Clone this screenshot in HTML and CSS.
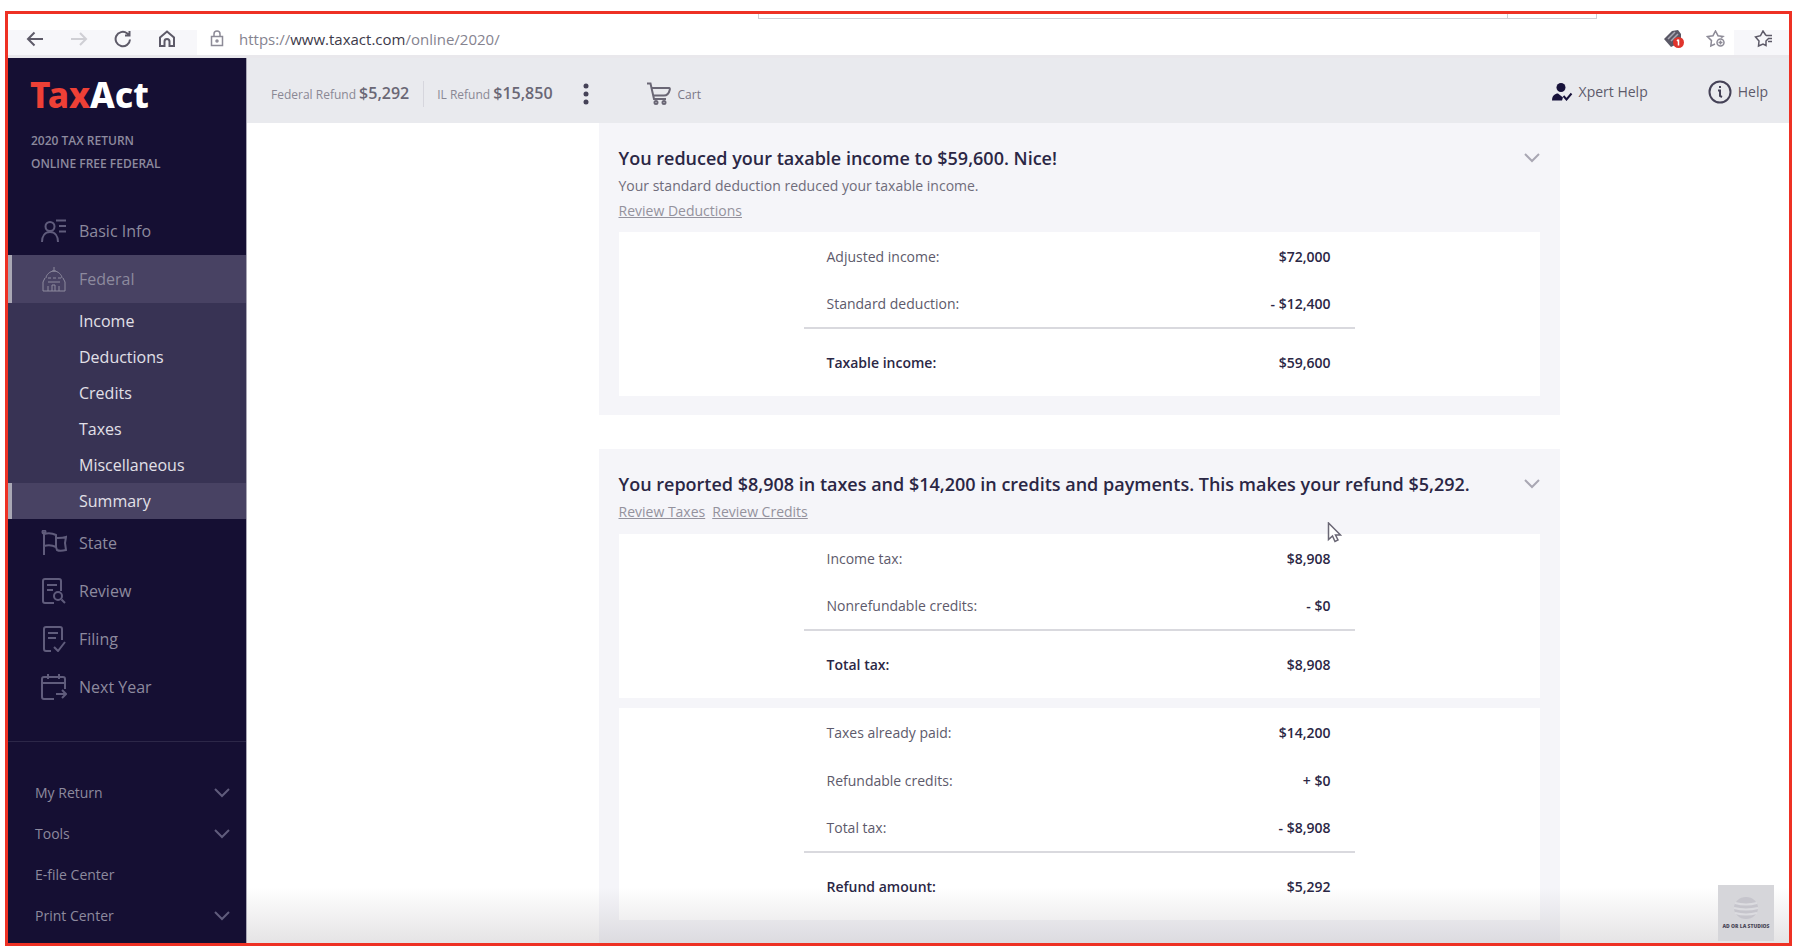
FILE: index.html
```html
<!DOCTYPE html>
<html lang="en">
<head>
<meta charset="utf-8">
<title>TaxAct - Federal Summary</title>
<link rel="stylesheet" href="styles.css">
</head>
<body>
<div class="window">
  <header class="browser">
    <div class="tabline"><div class="searchbox"></div></div>
    <div class="toolbar">
      <div class="nav-buttons">
        <button aria-label="Back"><svg width="18" height="16" viewBox="0 0 18 16"><path d="M17 8H2M8.500 1.500L2 8l6.500 6.500"/></svg></button>
        <button class="faded" aria-label="Forward"><svg width="18" height="16" viewBox="0 0 18 16"><path d="M1 8h15M10 2l6 6-6 6"/></svg></button>
        <button aria-label="Refresh"><svg width="18" height="18" viewBox="0 0 18 18"><path d="M16 9.500A7.200 7.200 0 1 1 13 3.200l2 1.500M15.500 1v4.500H11"/></svg></button>
        <button aria-label="Home"><svg width="18" height="18" viewBox="0 0 18 18"><path d="M2 7.500L9 1.500l7 6V16h-4.500v-4.500a2.500 2.500 0 0 0-5 0V16H2z"/></svg></button>
      </div>
      <div class="address">
        <svg class="lock" width="14" height="18" viewBox="0 0 14 18"><path d="M1.500 6.500h11v9h-11zM4 6.500V4a3 3 0 0 1 6 0v2.500"/><circle cx="7" cy="11" r="1"/></svg>
        <span class="url">https://<b>www.taxact.com</b>/online/2020/</span>
        <svg class="ext" width="22" height="20" viewBox="0 0 22 20"><path d="M1 10l8-8 6-1 3 4v10l-6 1-4 2z" fill="#5a5866"/><path d="M5 10l7-7M8 12l7-7" stroke="#a9a7b3" stroke-width="1.500"/><circle cx="15.500" cy="13.500" r="5.500" fill="#e0342c"/><path d="M15.500 10.500v6M14 12l1.500-1.500" stroke="#fff" stroke-width="1.500"/></svg>
        <svg class="fav" width="20" height="18" viewBox="0 0 20 18"><path d="M15 8l2-1.500-5-.8L9.500 1 7 5.700l-5.500.9 4 4L4.800 16 9 14"/><circle cx="14.500" cy="12.500" r="3.500"/><path d="M14.500 10.500v4M12.500 12.500h4"/></svg>
      </div>
      <button class="collections" aria-label="Favorites"><svg width="20" height="18" viewBox="0 0 20 18"><path d="M12 5.500L9 1 6.500 5.700 1.500 7l3.500 4L4.500 16 9 14l3 1.500V11l3-3M12 5.500h6M15 8.500h3M14 11.500h4"/></svg></button>
    </div>
  </header>
  <div class="app">
    <aside class="sidebar">
      <div class="logo"><span>Tax</span>Act</div>
      <p class="product">2020 TAX RETURN<br>ONLINE FREE FEDERAL</p>
      <nav class="menu">
        <a href="#"><svg width="26" height="24" viewBox="0 0 26 24"><circle cx="9" cy="7.500" r="4.500"/><path d="M1 23c0-6 3-10 8-10s8 4 8 10M15 1.500h10M18 7h7M18 12.500h7"/></svg>Basic Info</a>
        <a href="#" class="active"><svg width="26" height="26" viewBox="0 0 26 26"><path d="M13 1v4M11 5h4M5 12c0-3 4-7 8-7s8 4 8 7M4 12L2 16v9h22v-9l-2-4M7 12h3M12 12h3M17 12h3M7 25v-5M11 25v-6h3v6M18 25v-5M7 16h12"/></svg>Federal</a>
        <div class="submenu">
          <a href="#">Income</a><a href="#">Deductions</a><a href="#">Credits</a><a href="#">Taxes</a><a href="#">Miscellaneous</a><a href="#" class="current">Summary</a>
        </div>
        <a href="#"><svg width="26" height="26" viewBox="0 0 26 26"><path d="M3 2v23M3 4c4-1 8-1 12 1v12c-4-2-8-2-12-1M15 8h2c3 0 5 0 8-1l-1 6 1 7c-4 1-7 1-9 0l-1-3"/><circle cx="3" cy="2" r="1.500"/></svg>State</a>
        <a href="#"><svg width="26" height="26" viewBox="0 0 26 26"><path d="M13 25H4a2 2 0 0 1-2-2V3a2 2 0 0 1 2-2h14a2 2 0 0 1 2 2v10M6 7h10M6 12h6M20.500 21.500L24 25"/><circle cx="17" cy="18" r="4"/></svg>Review</a>
        <a href="#"><svg width="26" height="26" viewBox="0 0 26 26"><path d="M10 25H5a2 2 0 0 1-2-2V3a2 2 0 0 1 2-2h14a2 2 0 0 1 2 2v11M7 7h10M7 12h8M13 21l4 4 7-9"/></svg>Filing</a>
        <a href="#"><svg width="26" height="26" viewBox="0 0 26 26"><path d="M13 25H3a2 2 0 0 1-2-2V5a2 2 0 0 1 2-2h19a2 2 0 0 1 2 2v10M1 9h23M7 0v5M18 0v5M15 20h10M21 16l4 4-4 4"/></svg>Next Year</a>
      </nav>
      <nav class="tools">
        <button>My Return<svg width="16" height="10" viewBox="0 0 16 10"><path d="M1 1l7 7 7-7"/></svg></button>
        <button>Tools<svg width="16" height="10" viewBox="0 0 16 10"><path d="M1 1l7 7 7-7"/></svg></button>
        <button>E-file Center</button>
        <button>Print Center<svg width="16" height="10" viewBox="0 0 16 10"><path d="M1 1l7 7 7-7"/></svg></button>
      </nav>
    </aside>
    <div class="content">
      <div class="topbar">
        <div class="status">
          <div class="refund">Federal Refund <strong>$5,292</strong></div>
          <div class="refund split">IL Refund <strong>$15,850</strong></div>
          <button class="more" aria-label="More"><svg width="6" height="22" viewBox="0 0 6 22"><circle cx="3" cy="3" r="2.500"/><circle cx="3" cy="11" r="2.500"/><circle cx="3" cy="19" r="2.500"/></svg></button>
          <a class="cart" href="#"><svg width="24" height="24" viewBox="0 0 24 24"><path d="M0 1.500h3.500L7 17h12M5 6h17c1 0 1 1 .7 2-.7 3-2 5.500-5.700 5.500H7"/><circle cx="9" cy="20.500" r="1.500"/><circle cx="17" cy="20.500" r="1.500"/></svg><span>Cart</span></a>
        </div>
        <a class="help" href="#"><svg width="21" height="18" viewBox="0 0 21 18"><circle cx="9" cy="4.500" r="4.500" fill="#17123a"/><path d="M0 17.500c0-5 3-7 6-7l5 4-1 3z" fill="#17123a"/><path d="M11.500 13l3 3.500 5-6" fill="none" stroke="#17123a" stroke-width="2"/></svg>Xpert Help</a>
        <a class="help" href="#"><svg width="24" height="24" viewBox="0 0 24 24" fill="none" stroke="#454257" stroke-width="2"><circle cx="12" cy="12" r="10.500"/><path d="M10 10.500h2v5.500l2 1M12 6v2"/></svg>Help</a>
      </div>
      <main class="page">
        <section class="card">
          <div class="card-head">
            <h2>You reduced your taxable income to $59,600. Nice!</h2>
            <button aria-label="Collapse"><svg width="16" height="10" viewBox="0 0 16 10"><path d="M1 1l7 7 7-7"/></svg></button>
          </div>
          <p>Your standard deduction reduced your taxable income.</p>
          <div class="links"><a href="#">Review Deductions</a></div>
          <div class="panel"><table>
            <tr><th>Adjusted income:</th><td>$72,000</td></tr>
            <tr><th>Standard deduction:</th><td>- $12,400</td></tr>
            <tr class="total"><th>Taxable income:</th><td>$59,600</td></tr>
          </table></div>
        </section>
        <section class="card">
          <div class="card-head">
            <h2>You reported $8,908 in taxes and $14,200 in credits and payments. This makes your refund $5,292.</h2>
            <button aria-label="Collapse"><svg width="16" height="10" viewBox="0 0 16 10"><path d="M1 1l7 7 7-7"/></svg></button>
          </div>
          <div class="links"><a href="#">Review Taxes</a><a href="#">Review Credits</a></div>
          <div class="panel"><table>
            <tr><th>Income tax:</th><td>$8,908</td></tr>
            <tr><th>Nonrefundable credits:</th><td>- $0</td></tr>
            <tr class="total"><th>Total tax:</th><td>$8,908</td></tr>
          </table></div>
          <div class="panel"><table>
            <tr><th>Taxes already paid:</th><td>$14,200</td></tr>
            <tr><th>Refundable credits:</th><td>+ $0</td></tr>
            <tr><th>Total tax:</th><td>- $8,908</td></tr>
            <tr class="total"><th>Refund amount:</th><td>$5,292</td></tr>
          </table></div>
          <svg class="cursor" width="15" height="21" viewBox="0 0 15 21"><path d="M1.500 1v16.500l4-3.500 2.500 5.500 3-1.500-2.500-5h5z"/></svg>
        </section>
      </main>
      <div class="shade"></div>
      <div class="watermark"><svg width="26" height="24" viewBox="0 0 26 24"><ellipse cx="13" cy="12" rx="12" ry="11" fill="#c6c5cc"/><path d="M2 7q11 3 22 0M1 12q12 3 24 0M2 17q11 3 22 0" fill="none" stroke="#dcdce0" stroke-width="2"/></svg><span>AD OR LA STUDIOS</span></div>
    </div>
  </div>
</div>
</body>
</html>
```
FILE: styles.css
```css
* { box-sizing: border-box; }
html, body { height: 100%; }
body { margin: 0; padding: 11px 8px 6px 5px; background: #fff; font-family: "Open Sans", "Noto Sans", sans-serif; color: #454257; }
button { border: 0; padding: 0; background: none; font: inherit; color: inherit; display: flex; align-items: center; }
a { color: inherit; text-decoration: none; }
svg { flex: none; display: block; }

.window { height: 100%; display: flex; flex-direction: column; border: 3px solid #ee3124; overflow: hidden; }

.browser { flex: none; border-bottom: 3px solid #e9e8ec; }
.tabline { height: 16px; padding: 0 192px 0 750px; }
.searchbox { height: 5px; border: 1px solid #cfced4; border-top: 0; background: linear-gradient(#cfced4, #cfced4) 89.500% 0 / 1px 100% no-repeat; }
.toolbar { height: 25px; display: flex; background: #f7f7fa; }
.toolbar svg { fill: none; stroke: #5d5a68; stroke-width: 2; }
.nav-buttons { display: flex; align-items: center; gap: 26px; padding: 0 21px 8px 18px; }
.nav-buttons .faded { opacity: .25; }
.address { flex: 1; display: flex; align-items: center; background: #fff; padding: 0 8px 8px 13px; }
.toolbar .lock, .toolbar .fav { stroke: #8d8b97; stroke-width: 1.500; }
.url { flex: 1; margin-left: 15px; font-size: 15px; line-height: 18px; color: #85838f; }
.url b { font-weight: 400; color: #3d3a4a; }
.toolbar .ext { stroke: none; margin-right: 21px; }
.collections { padding: 0 15px 8px 20px; }
.toolbar .collections svg { stroke-width: 1.500; }

.app { flex: 1; min-height: 0; display: flex; }
.sidebar { width: 239px; flex: none; background: #150f33; border-right: 1px solid #a9a7b5; color: #8d8a9e; overflow: hidden; }
.logo { margin: 17px 0 0 22px; font-size: 35px; line-height: 40px; font-weight: 800; color: #fff; font-family: "Noto Sans", "Open Sans", sans-serif; }
.logo span { color: #ee4036; }
.product { margin: 14px 0 32px 23px; font-size: 12px; line-height: 23px; font-weight: 600; }
.menu a { height: 48px; display: flex; align-items: center; gap: 12px; padding-left: 33px; font-size: 16px; }
.menu svg { fill: none; stroke: #605c7c; stroke-width: 2; }
.menu a.active { background: #484263; border-left: 4px solid #aaa8b5; padding-left: 29px; }
.menu .active svg { stroke-width: 1; stroke: #8d8a9e; }
.submenu { background: #383354; }
.menu .submenu a { height: 36px; padding-left: 71px; color: #e2e0e8; font-weight: 500; }
.menu .submenu a.current { background: #484263; border-left: 4px solid #aaa8b5; padding-left: 67px; }
.tools { margin-top: 30px; padding: 30px 16px 0 27px; border-top: 1px solid #2c2748; }
.tools button { width: 100%; height: 41px; justify-content: space-between; font-size: 14px; }
.tools svg { fill: none; stroke: #605c7c; stroke-width: 2; }

.content { flex: 1; min-width: 0; position: relative; display: flex; flex-direction: column; overflow: hidden; }
.topbar { flex: none; height: 65px; display: flex; align-items: center; gap: 60px; padding: 2px 21px 0 24px; background: #e9eaee; }
.status { flex: 1; display: flex; align-items: center; padding-top: 5px; }
.refund { font-size: 12px; line-height: 24px; color: #8a8894; }
.refund strong { font-size: 16px; font-weight: 600; color: #6a6775; }
.split { margin-left: 14px; padding-left: 13px; border-left: 1px solid #d6d6dd; }
.more { margin-left: 30px; }
.more svg { fill: #454257; }
.cart { display: flex; align-items: center; gap: 7px; margin-left: 58px; font-size: 12px; color: #7a7785; }
.cart svg { fill: none; stroke: #6a6775; stroke-width: 2; }
.help { display: flex; align-items: center; gap: 6px; font-size: 14px; color: #5d5a6b; }

.page { flex: 1; min-height: 0; padding-left: 122px; }
.card { position: relative; max-width: 961px; margin: 0 auto 34px; padding: 22px 20px 19px; background: #f5f5f9; }
.card:last-of-type { padding-bottom: 40px; }
.card-head { display: flex; justify-content: space-between; height: 26px; }
.card-head button { height: 26px; }
.card-head svg { fill: none; stroke: #a9a7b3; stroke-width: 2; }
h2 { margin: 0; font-size: 18px; line-height: 26px; font-weight: 600; color: #2b2745; }
.card p { margin: 4px 0 0; font-size: 14px; line-height: 22px; color: #6f6c7b; }
.links { display: flex; gap: 7px; padding: 3px 0 10px; font-size: 14px; line-height: 24px; color: #94929d; }
.links a { text-decoration: underline; }
.card p + .links { padding: 2px 0 9px; }
.panel { background: #fff; padding: 0 185px; }
.panel + .panel { margin-top: 10px; }
table { width: 100%; border-collapse: collapse; font-size: 14px; }
tr { height: 48px; }
th { padding: 0 0 0 23px; text-align: left; font-weight: 400; color: #5d5a6b; }
td { padding: 0 24px 0 0; text-align: right; font-weight: 600; color: #2b2745; }
.total { height: 68px; border-top: 2px solid #d9d9de; }
.total th { font-weight: 600; color: #2b2745; }
.cursor { position: absolute; left: 728px; top: 73px; fill: #fff; stroke: #6a6775; stroke-width: 1.500; }

.shade { position: absolute; left: 0; right: 0; bottom: 0; height: 56px; background: linear-gradient(rgba(40,30,40,0), rgba(40,30,40,.12)); }
.watermark { position: absolute; right: 15px; bottom: 2px; width: 56px; height: 56px; padding-top: 11px; background: #d6d6da; display: flex; flex-direction: column; align-items: center; }
.watermark span { font-size: 5px; line-height: 12px; font-weight: 800; color: #4a4858; white-space: nowrap; }
```
